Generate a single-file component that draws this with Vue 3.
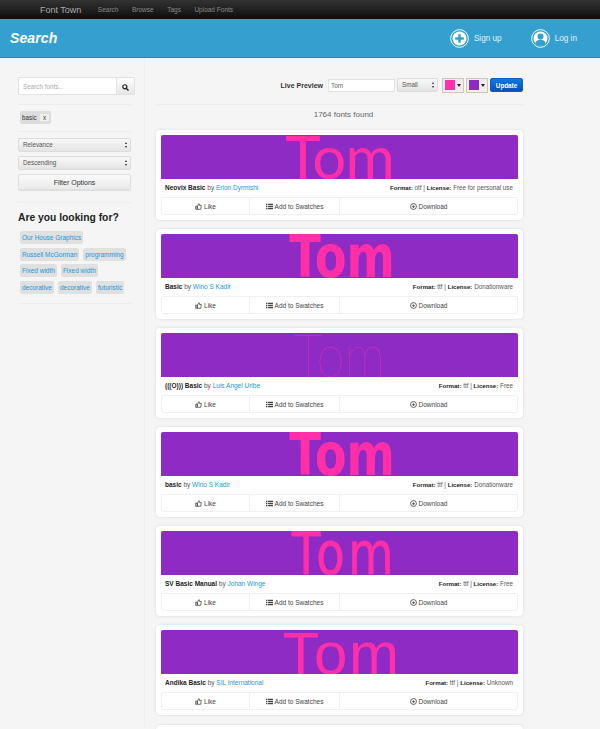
<template>
  <div class="page">
    <div class="topbar">
      <span class="brand">Font Town</span>
      <a v-for="link in navLinks" :key="link">{{ link }}</a>
    </div>

    <header class="pagehead">
      <h1>Search</h1>
      <div class="account">
        <a class="account-link">
          <svg width="19" height="19" viewBox="0 0 20 20">
            <circle cx="10" cy="10" r="9.300" fill="none" stroke="#fff" stroke-width="1" />
            <circle cx="10" cy="10" r="7.300" fill="#fff" />
            <path d="M10 5.500v9M5.500 10h9" stroke="#35a0d0" stroke-width="2.600" />
          </svg>
          Sign up
        </a>
        <a class="account-link">
          <svg width="19" height="19" viewBox="0 0 20 20">
            <circle cx="10" cy="10" r="9.300" fill="none" stroke="#fff" stroke-width="1" />
            <circle cx="10" cy="10" r="7.300" fill="#fff" />
            <circle cx="10" cy="8" r="3.200" fill="#35a0d0" />
            <path d="M4.500 15c1-3 3-3.600 5.500-3.600s4.500.6 5.500 3.600a7 7 0 0 1-11 0z" fill="#35a0d0" />
          </svg>
          Log in
        </a>
      </div>
    </header>

    <div class="layout">
      <aside class="sidebar">
        <div class="searchbox">
          <input type="text" placeholder="Search fonts..." />
          <button type="button">
            <svg width="7" height="7" viewBox="0 0 10 10">
              <circle cx="4" cy="4" r="2.900" fill="none" stroke="#222" stroke-width="1.700" />
              <path d="M6.300 6.300l3 3" stroke="#222" stroke-width="2" />
            </svg>
          </button>
        </div>
        <hr />
        <span class="filter-tag">basic <b>x</b></span>
        <hr class="tag-rule" />
        <div class="fake-select">Relevance<i></i></div>
        <div class="fake-select">Descending<i></i></div>
        <button type="button" class="filter-btn">Filter Options</button>
        <hr class="side-rule" />
        <h3>Are you looking for?</h3>
        <div class="suggestions">
          <a v-for="(tag, i) in suggestions" :key="i">{{ tag }}</a>
        </div>
        <hr class="side-rule end" />
      </aside>

      <main class="results">
        <div class="live-preview">
          <label>Live Preview</label>
          <input type="text" value="Tom" />
          <div class="fake-select small">Small<i></i></div>
          <span class="swatch"><em class="pink"></em><u></u></span>
          <span class="swatch"><em class="purple"></em><u></u></span>
          <button type="button" class="update">Update</button>
        </div>
        <hr />
        <p class="count">1764 fonts found</p>

        <article v-for="font in fonts" :key="font.name + font.author" class="card">
          <div class="preview" :class="font.style"><span>Tom</span></div>
          <div class="meta">
            <span><b>{{ font.name }}</b> by <a>{{ font.author }}</a></span>
            <span class="info"><b>Format:</b> {{ font.format }} | <b>License:</b> {{ font.license }}</span>
          </div>
          <div class="actions">
            <a>
              <svg width="7" height="7" viewBox="0 0 10 10">
                <path d="M1 4.500h2v4.500H1zM3.500 4.500L5.500 1c1 0 1.200 1 .8 2.500H9l-.8 5.500H3.500z" fill="none" stroke="#444" stroke-width="1.100" />
              </svg>
              Like
            </a>
            <a>
              <svg width="7" height="7" viewBox="0 0 10 10">
                <path d="M0 1h2v2H0zM3 1h7v2H3zM0 4h2v2H0zM3 4h7v2H3zM0 7h2v2H0zM3 7h7v2H3z" fill="#444" />
              </svg>
              Add to Swatches
            </a>
            <a>
              <svg width="7" height="7" viewBox="0 0 10 10">
                <circle cx="5" cy="5" r="4.200" fill="none" stroke="#444" stroke-width="1.200" />
                <path d="M5 2.500v3M3.200 4.800L5 7l1.800-2.200z" fill="#444" stroke="#444" stroke-width=".6" />
              </svg>
              Download
            </a>
          </div>
        </article>
      </main>
    </div>
  </div>
</template>

<script setup>
const navLinks = ['Search', 'Browse', 'Tags', 'Upload Fonts']

const suggestions = [
  'Our House Graphics',
  'Russell McGorman',
  'programming',
  'Fixed width',
  'Fixed width',
  'decorative',
  'decorative',
  'futuristic'
]

const fonts = [
  { name: 'Neovix Basic', author: 'Erion Dyrmishi', format: 'otf', license: 'Free for personal use', style: 'neovix' },
  { name: 'Basic', author: 'Wino S Kadir', format: 'ttf', license: 'Donationware', style: 'heavy' },
  { name: '(((O))) Basic', author: 'Luis Angel Uribe', format: 'ttf', license: 'Free', style: 'hairline' },
  { name: 'basic', author: 'Wino S Kadir', format: 'ttf', license: 'Donationware', style: 'heavy' },
  { name: 'SV Basic Manual', author: 'Johan Winge', format: 'ttf', license: 'Free', style: 'manual' },
  { name: 'Andika Basic', author: 'SIL International', format: 'ttf', license: 'Unknown', style: 'andika' },
  { name: 'Basic Title', author: 'Unknown', format: 'ttf', license: 'Free', style: 'andika' }
]
</script>

<style>
html,
body {
  margin: 0;
  overflow: hidden;
  background: #f5f5f5;
}
</style>

<style scoped>
.page {
  height: 729px;
  overflow: hidden;
  background: #f5f5f5;
  color: #222;
  font-family: "Liberation Sans", Arial, sans-serif;
  font-size: 7px;
}

.topbar {
  height: 19px;
  box-sizing: border-box;
  padding-left: 40px;
  display: flex;
  align-items: center;
  gap: 13.500px;
  background: linear-gradient(#333, #0c0c0c);
  color: #8a8a8a;
}

.topbar a {
  font-size: 6.500px;
}

.brand {
  font-size: 9px;
  color: #aaa;
  margin-right: 3px;
}

.pagehead {
  height: 39px;
  box-sizing: border-box;
  display: flex;
  align-items: center;
  justify-content: space-between;
  padding: 0 23px 0 10px;
  background: #35a0d0;
  border-bottom: 1px solid #2b87b2;
  color: #fff;
}

.pagehead h1 {
  margin: 0;
  font-size: 14px;
  font-style: italic;
  letter-spacing: .1px;
}

.account {
  display: flex;
  gap: 29px;
}

.account-link {
  display: flex;
  align-items: center;
  gap: 5px;
  font-size: 8.200px;
  color: #e0f0f8;
}

.layout {
  display: flex;
  align-items: flex-start;
}

.sidebar {
  width: 113px;
  margin-left: 18px;
  padding: 19px 13px 0 0;
  border-right: 1px solid #efefef;
  min-height: 650px;
}

.searchbox {
  display: flex;
  height: 18px;
  width: 117px;
}

.searchbox input {
  flex: 1;
  min-width: 0;
  box-sizing: border-box;
  border: 1px solid #e2e2e2;
  border-right: none;
  border-radius: 2px 0 0 2px;
  padding: 0 4px;
  font: 6.300px "Liberation Sans", Arial, sans-serif;
  background: #fff;
}

.searchbox input::placeholder {
  color: #aaa;
}

.searchbox button {
  width: 19px;
  padding: 0;
  border: 1px solid #e2e2e2;
  border-radius: 0 2px 2px 0;
  background: linear-gradient(#fff, #e6e6e6);
}

hr {
  border: none;
  border-top: 1px solid #eee;
  margin: 9px 0 6px;
}

.filter-tag {
  display: inline-block;
  margin-left: 2px;
  padding: 3px 2px;
  background: #ddd;
  border-radius: 2px;
  font-size: 6.300px;
  line-height: 7px;
  color: #333;
}

.filter-tag b {
  display: inline-block;
  margin-left: 2px;
  padding: 0 2.500px;
  background: #f0f0f0;
  font-weight: 400;
}

.tag-rule {
  margin: 7px 0 6px;
}

.fake-select {
  position: relative;
  box-sizing: border-box;
  height: 14px;
  line-height: 12px;
  margin-bottom: 4px;
  padding-left: 4px;
  border: 1px solid #dcdcdc;
  border-radius: 2px;
  background: linear-gradient(#f8f8f8, #e4e4e4);
  font-size: 6.300px;
  color: #555;
}

.fake-select i {
  position: absolute;
  right: 3px;
  top: 3px;
  border-left: 1.500px solid transparent;
  border-right: 1.500px solid transparent;
  border-bottom: 2.500px solid #222;
}

.fake-select i::after {
  content: "";
  position: absolute;
  left: -1.500px;
  top: 4px;
  border-left: 1.500px solid transparent;
  border-right: 1.500px solid transparent;
  border-top: 2.500px solid #222;
}

.filter-btn {
  display: block;
  width: 100%;
  height: 16px;
  padding: 0;
  border: 1px solid #e0e0e0;
  border-radius: 2px;
  background: linear-gradient(#fafafa, #eaeaea);
  box-shadow: 0 1px 1px rgba(0, 0, 0, .1);
  font: 7px "Liberation Sans", Arial, sans-serif;
  color: #333;
}

.side-rule {
  margin: 12px 0 8px;
}

.sidebar h3 {
  margin: 0 0 7px;
  font-size: 10.300px;
  line-height: 13px;
  color: #222;
}

.suggestions {
  display: flex;
  flex-wrap: wrap;
  gap: 3.700px 4px;
  padding-left: 2px;
}

.suggestions a {
  padding: 2px 2px;
  background: #e0e0e0;
  border-radius: 2px;
  font-size: 6.500px;
  line-height: 9px;
  color: #1b95d8;
  white-space: nowrap;
}

.side-rule.end {
  margin-top: 9px;
}

.results {
  width: 367px;
  margin-left: 11px;
  padding-top: 19px;
}

.live-preview {
  display: flex;
  align-items: center;
  justify-content: flex-end;
  gap: 2px;
  height: 16px;
}

.live-preview label {
  font-weight: 700;
  color: #333;
  margin-right: 3px;
}

.live-preview input {
  width: 67px;
  height: 13px;
  box-sizing: border-box;
  padding: 0 2px;
  border: 1px solid #e2e2e2;
  font: 6.500px "Liberation Sans", Arial, sans-serif;
  color: #666;
  background: #fff;
}

.fake-select.small {
  width: 41px;
  margin: 0 2px 0 0;
}

.swatch {
  display: flex;
  align-items: center;
  gap: 2px;
  box-sizing: border-box;
  width: 22px;
  height: 15px;
  padding: 0 2px;
  border: 1px solid #cdc6b8;
  background: #eee;
}

.swatch em {
  width: 12px;
  height: 10px;
}

.swatch u {
  border-left: 2px solid transparent;
  border-right: 2px solid transparent;
  border-top: 3px solid #222;
}

.pink {
  background: #ff2fa8;
}

.purple {
  background: #8d2bc4;
}

.update {
  width: 33px;
  height: 14px;
  padding: 0;
  border: 1px solid #0a5fc4;
  border-radius: 2px;
  background: linear-gradient(#0f7be0, #0650b8);
  color: #fff;
  font: 700 6.300px "Liberation Sans", Arial, sans-serif;
}

.results hr {
  margin: 11px 0 0;
}

.count {
  margin: 5px 0 10px;
  padding-left: 8px;
  line-height: 10px;
  text-align: center;
  font-size: 8px;
  color: #666;
}

.card {
  box-sizing: border-box;
  height: 90px;
  margin-bottom: 9.100px;
  padding: 5px;
  background: #fff;
  border-radius: 4px;
  box-shadow: 0 0 3px rgba(0, 0, 0, .12);
}

.preview {
  height: 44px;
  overflow: hidden;
  text-align: center;
  background: #8d2bc4;
  border-radius: 2px 2px 0 0;
  color: #ff2fa8;
  white-space: nowrap;
}

.preview span {
  display: inline-block;
}

.neovix {
  font-family: Lato, sans-serif;
  font-size: 60px;
  line-height: 42px;
  letter-spacing: -1px;
}

.heavy {
  font-family: "DejaVu Sans", sans-serif;
  font-weight: 700;
  font-size: 58px;
  line-height: 46px;
}

.heavy span {
  margin-left: 6px;
  transform: scaleX(.8);
}

.hairline {
  font-family: Lato, sans-serif;
  font-weight: 100;
  font-size: 60px;
  line-height: 42px;
  color: #dc2cb4;
}

.hairline span {
  transform: scaleX(.85);
}

.manual {
  font-family: "DejaVu Sans", sans-serif;
  font-size: 58px;
  line-height: 46px;
  letter-spacing: 4.500px;
  -webkit-text-stroke: .8px #ff2fa8;
}

.manual span {
  margin-left: 10px;
  transform: scaleX(.8);
}

.andika {
  font-family: "Liberation Sans", Arial, sans-serif;
  font-size: 60px;
  line-height: 47px;
  letter-spacing: 1.500px;
}

.andika span {
  margin-left: 4px;
}

.meta {
  display: flex;
  justify-content: space-between;
  height: 18px;
  padding: 0 5px 0 4px;
  line-height: 17px;
  font-size: 6.500px;
  color: #555;
}

.meta b {
  color: #222;
}

.meta a {
  color: #1b95d8;
}

.info {
  font-size: 6.300px;
}

.info b {
  font-size: 6.100px;
}

.actions {
  display: grid;
  grid-template-columns: 87px 90px 1fr;
  height: 18px;
  border: 1px solid #f0f0f0;
  border-radius: 0 0 3px 3px;
  box-sizing: border-box;
}

.actions a {
  display: flex;
  align-items: center;
  justify-content: center;
  gap: 2px;
  font-size: 6.500px;
  color: #444;
}

.actions a + a {
  border-left: 1px solid #f0f0f0;
}
</style>
